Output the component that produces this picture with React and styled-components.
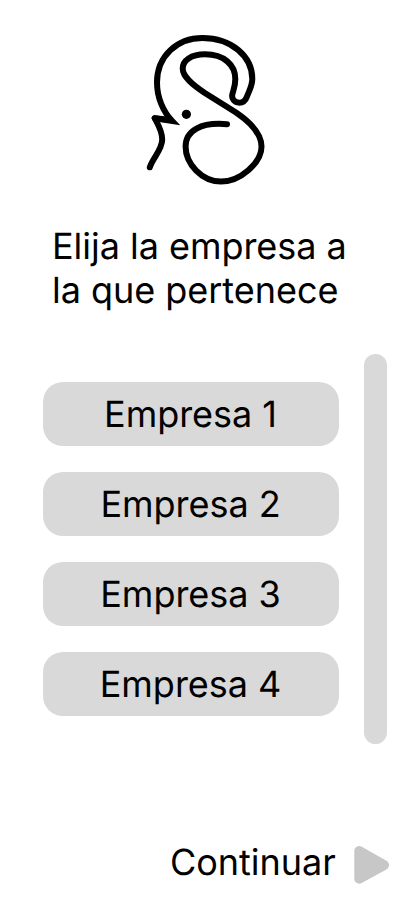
import React from "react";
import styled, { createGlobalStyle } from "styled-components";

const GlobalStyle = createGlobalStyle`
  *, *::before, *::after { box-sizing: border-box; }
  body { margin: 0; background: #fff; }
`;

const Screen = styled.main`
  display: flex;
  flex-direction: column;
  height: 917px;
  width: 412px;
  padding-top: 30px;
  background: #fff;
  color: #000;
  font-family: Inter, sans-serif;
  font-size: 36px;
  font-weight: 400;
  line-height: 44px;
  letter-spacing: -0.03px;
  text-rendering: geometricPrecision;
  overflow: hidden;
`;

const Logo = styled.svg`
  display: block;
  flex: none;
  width: 130px;
  height: 160px;
  margin-left: 140px;
`;

const Title = styled.h1`
  margin: 34px 0 0 52px;
  width: 308px;
  font: inherit;
  white-space: nowrap;
`;

const Picker = styled.section`
  display: flex;
  justify-content: space-between;
  height: 390px;
  margin-top: 42px;
  padding: 0 25px 0 43px;
`;

const CompanyList = styled.div`
  display: flex;
  flex-direction: column;
  gap: 26px;
  width: 296px;
  padding-top: 28px;
`;

const CompanyButton = styled.button`
  height: 64px;
  padding: 0 1px 0 0;
  border: 0;
  border-radius: 20px;
  background: #d9d9d9;
  color: inherit;
  font: inherit;
  letter-spacing: inherit;
  text-rendering: inherit;
  cursor: pointer;
`;

const ScrollTrack = styled.div`
  width: 23px;
  border-radius: 12px;
  background: #d9d9d9;
`;

const ContinueButton = styled.button`
  display: flex;
  align-items: flex-start;
  justify-content: space-between;
  width: 220px;
  margin: 96px 0 0 170px;
  padding: 0;
  border: 0;
  background: none;
  color: inherit;
  font: inherit;
  letter-spacing: inherit;
  text-rendering: inherit;
  cursor: pointer;
`;

const PlayIcon = styled.svg`
  display: block;
  flex: none;
  width: 36px;
  height: 40px;
  margin-top: 5px;
`;

const companies = ["Empresa 1", "Empresa 2", "Empresa 3", "Empresa 4"];

export default function App() {
  return (
    <>
      <GlobalStyle />
      <Screen>
        <Logo viewBox="140 30 130 160" fill="none" aria-hidden="true">
          <g stroke="#000" strokeWidth="6" strokeLinecap="round">
            <path
              d="M149.800 167.300C152.500 158 162.200 150 162.200 139.500C162.200 131 158 124.500 154.700 118.200L164 119.300"
              strokeLinejoin="round"
            />
            <path
              d="M154.700 118.200L172 120.900C163.500 112 157 98 157 82.500C157 56 177 38 202.500 38C231 38 252.300 56 252.300 79C252.300 86 248.900 91 247 96.500C245.400 101 242.700 102.700 239.200 102.700C234.500 102.700 231.400 98.800 232.300 94.500C233.200 90.500 235.300 87 235.300 79C235.300 65 224 54.300 205 54.300C191 54.300 182.700 60.500 182.700 68.500C182.700 77 193 85 204.500 92.800L236 112.500C250 122 261.500 133.500 261.500 146.500C261.500 163 240 181.500 221 181.500C202 181.500 185.600 164 185.600 146.500C185.600 130.500 201 122 227 124.200"
              strokeMiterlimit="8"
            />
          </g>
          <circle cx="186.400" cy="114.300" r="4.600" fill="#000" />
        </Logo>
        <Title>
          Elija la empresa a<br />
          la que pertenece
        </Title>
        <Picker>
          <CompanyList>
            {companies.map((name) => (
              <CompanyButton key={name} type="button">{name}</CompanyButton>
            ))}
          </CompanyList>
          <ScrollTrack />
        </Picker>
        <ContinueButton type="button">
          <span>Continuar</span>
          <PlayIcon viewBox="354 845 36 40" aria-hidden="true">
            <path
              d="M359.300 851V878.700L384 865.200Z"
              fill="#c7c7c7"
              stroke="#c7c7c7"
              strokeWidth="10"
              strokeLinejoin="round"
            />
          </PlayIcon>
        </ContinueButton>
      </Screen>
    </>
  );
}
